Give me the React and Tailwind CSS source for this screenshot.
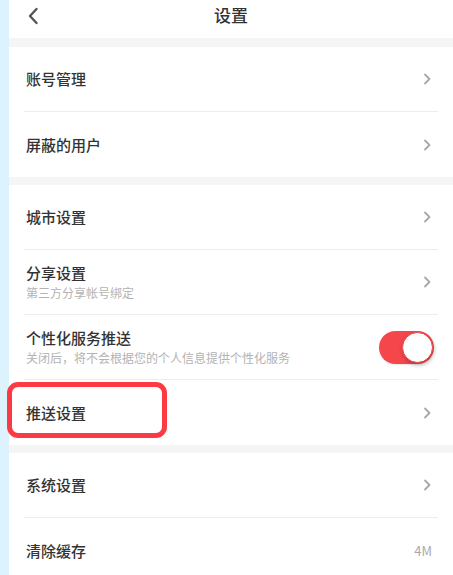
const Chevron = () => (
  <svg width="8" height="12" viewBox="0 0 8 12" fill="none">
    <path d="M2 1.5 L6.5 6 L2 10.5" stroke="#a8a8a8" strokeWidth="1.8" strokeLinecap="round" strokeLinejoin="round" />
  </svg>
);

const Row = ({ title, sub, right, last, highlight }) => (
  <div className="relative shrink-0">
    {highlight && (
      <div className="absolute left-[-2px] top-[2px] w-[160px] h-[56px] border-[5px] border-[#fc3a44] rounded-[11px] z-10" />
    )}
    <div className={`mx-[15px] h-[65px] flex items-center pl-[2px] pr-[7px] ${last ? "" : "border-b border-[#ededed]"}`}>
      <div className="flex-1 flex flex-col">
        <span className="text-[15px] leading-[20px] font-medium text-[#333]">{title}</span>
        {sub && <span className="text-[12px] leading-[18px] text-[#b3b3b3] mt-[1px]">{sub}</span>}
      </div>
      {right}
    </div>
  </div>
);

const Toggle = () => (
  <div className="w-[55px] h-[33px] rounded-full bg-[#f4464b] flex items-center justify-end pr-[1px] mr-[-3px] shadow-[0_1px_2px_rgba(0,0,0,0.1)]">
    <div className="w-[31px] h-[31px] rounded-full bg-white border border-[#e5474c] shadow-[1px_2px_4px_rgba(0,0,0,0.25)]" />
  </div>
);

const Band = () => <div className="h-[8px] shrink-0 bg-[#f5f5f5]" />;

export default function App() {
  return (
    <div className="w-[453px] h-[575px] overflow-hidden flex items-start bg-white" style={{ fontFamily: '"Noto Sans CJK SC", "Noto Sans", sans-serif' }}>
      <div className="w-[9px] h-[575px] shrink-0 bg-[#dcf3fd]" />
      <div className="flex-1 flex flex-col">
        <div className="h-[38px] pb-[8px] shrink-0 grid grid-cols-[1fr_auto_1fr] items-center">
          <div className="pl-[18px] flex items-center pt-[2px]">
            <svg width="12" height="18" viewBox="0 0 12 18" fill="none">
              <path d="M9.5 2 L3 9 L9.5 16" stroke="#555" strokeWidth="2.4" strokeLinecap="round" strokeLinejoin="round" />
            </svg>
          </div>
          <span className="text-[17px] font-medium text-[#333]">设置</span>
          <div />
        </div>
        <div className="h-[9px] shrink-0 bg-[#f5f5f5]" />
        <Row title="账号管理" right={<Chevron />} />
        <Row title="屏蔽的用户" right={<Chevron />} last />
        <Band />
        <Row title="城市设置" right={<Chevron />} />
        <Row title="分享设置" sub="第三方分享帐号绑定" right={<Chevron />} />
        <Row title="个性化服务推送" sub="关闭后，将不会根据您的个人信息提供个性化服务" right={<Toggle />} />
        <Row title="推送设置" right={<Chevron />} last highlight />
        <Band />
        <Row title="系统设置" right={<Chevron />} />
        <Row title="清除缓存" right={<span className="text-[13px] text-[#aaa] mr-[-1px]">4M</span>} last />
      </div>
    </div>
  );
}
